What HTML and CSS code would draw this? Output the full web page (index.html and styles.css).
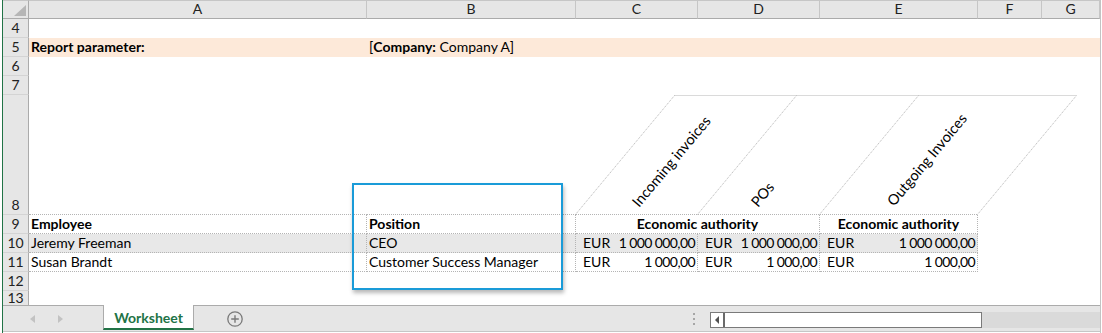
FILE: index.html
```html
<!DOCTYPE html>
<html>
<head>
<meta charset="utf-8">
<link rel="stylesheet" href="styles.css">
</head>
<body>
<div class="app">
  <div class="sheet">
    <div class="corner"></div>
    <div class="ch">A</div><div class="ch">B</div><div class="ch">C</div><div class="ch">D</div><div class="ch">E</div><div class="ch">F</div><div class="ch">G</div>

    <div class="rh">4</div>
    <div class="c"></div><div class="c"></div><div class="c"></div><div class="c"></div><div class="c"></div><div class="c"></div><div class="c"></div>

    <div class="rh">5</div>
    <div class="c or b">Report parameter:</div>
    <div class="c or">[<b>Company:</b> Company A]</div>
    <div class="c or"></div><div class="c or"></div><div class="c or"></div><div class="c or"></div><div class="c or"></div>

    <div class="rh">6</div>
    <div class="c"></div><div class="c"></div><div class="c"></div><div class="c"></div><div class="c"></div><div class="c"></div><div class="c"></div>

    <div class="rh">7</div>
    <div class="c"></div><div class="c"></div><div class="c"></div><div class="c"></div><div class="c"></div><div class="c"></div><div class="c"></div>

    <div class="rh rh-tall">8</div>
    <div class="c db"></div>
    <div class="c db"></div>
    <div class="diag">
      <svg class="diag-svg" width="524" height="120" viewBox="0 0 524 120">
        <g class="diag-lines">
          <line x1="-0.5" y1="119.5" x2="98.5" y2="0.5"/>
          <line x1="121.5" y1="119.5" x2="220.5" y2="0.5"/>
          <line x1="243.5" y1="119.5" x2="342.5" y2="0.5"/>
          <line x1="401.5" y1="119.5" x2="500.5" y2="0.5"/>
          <line x1="98.5" y1="0.5" x2="500.5" y2="0.5"/>
          <line x1="0" y1="119.5" x2="402" y2="119.5"/>
        </g>
        <text class="diag-text" x="63" y="113" transform="rotate(-50 63 113)">Incoming invoices</text>
        <text class="diag-text" x="182" y="113" transform="rotate(-50 182 113)">POs</text>
        <text class="diag-text" x="318" y="112" transform="rotate(-50 318 112)">Outgoing Invoices</text>
      </svg>
    </div>

    <div class="rh">9</div>
    <div class="c db dr b">Employee</div>
    <div class="c db dr b">Position</div>
    <div class="c db dr b ctr span2">Economic authority</div>
    <div class="c db dr b ctr">Economic authority</div>
    <div class="c"></div><div class="c"></div>

    <div class="rh">10</div>
    <div class="c db dr gr">Jeremy Freeman</div>
    <div class="c db dr gr">CEO</div>
    <div class="c db dr gr num"><span>EUR</span><span class="amt">1 000 000,00</span></div>
    <div class="c db dr gr num"><span>EUR</span><span class="amt">1 000 000,00</span></div>
    <div class="c db dr gr num"><span>EUR</span><span class="amt">1 000 000,00</span></div>
    <div class="c"></div><div class="c"></div>

    <div class="rh">11</div>
    <div class="c db dr">Susan Brandt</div>
    <div class="c db dr">Customer Success Manager</div>
    <div class="c db dr num"><span>EUR</span><span class="amt">1 000,00</span></div>
    <div class="c db dr num"><span>EUR</span><span class="amt">1 000,00</span></div>
    <div class="c db dr num"><span>EUR</span><span class="amt">1 000,00</span></div>
    <div class="c"></div><div class="c"></div>

    <div class="rh">12</div>
    <div class="c"></div><div class="c"></div><div class="c"></div><div class="c"></div><div class="c"></div><div class="c"></div><div class="c"></div>

    <div class="rh rh-last">13</div>
    <div class="c"></div><div class="c"></div><div class="c"></div><div class="c"></div><div class="c"></div><div class="c"></div><div class="c"></div>
  </div>

  <div class="tabbar">
    <div class="navs">
      <span class="nav-left"></span>
      <span class="nav-right"></span>
    </div>
    <div class="tab">Worksheet</div>
    <div class="plus">
      <svg width="16" height="16" viewBox="0 0 16 16">
        <circle cx="8" cy="8" r="7.2" fill="none" stroke="#7a7a7a" stroke-width="1.3"/>
        <path d="M8 4.2V11.8M4.2 8H11.8" stroke="#7a7a7a" stroke-width="1.4"/>
      </svg>
    </div>
    <div class="spacer"></div>
    <div class="dots"><i></i><i></i><i></i></div>
    <div class="hscroll">
      <div class="thumb">
        <div class="sbtn"><span class="sbtn-arrow"></span></div>
      </div>
    </div>
  </div>

  <div class="callout"></div>
</div>
</body>
</html>
```

FILE: styles.css
```css
* { box-sizing: border-box; }
html, body { margin: 0; padding: 0; background: #fff; }
body {
  width: 1102px;
  height: 333px;
  overflow: hidden;
  font-family: Lato, "Liberation Sans", sans-serif;
  font-size: 14px;
  color: #000;
}
.app {
  position: relative;
  margin-left: 2px;
  width: 1099px;
  height: 333px;
  border-left: 1px solid #217346;
  border-right: 1px solid #c3c3c3;
  display: flex;
  flex-direction: column;
}
.sheet {
  flex: none;
  height: 305px;
  overflow: hidden;
  display: grid;
  grid-template-columns: 26px 338px 209px 122px 122px 158px 64px 58px;
  grid-template-rows: repeat(5, 19px) 120px repeat(4, 19px) 14px;
}
.corner {
  position: relative;
  background: #e6e6e6;
  border-top: 1px solid #c6c6c6;
  border-right: 1px solid #ababab;
  border-bottom: 1px solid #ababab;
}
.corner::after {
  content: "";
  position: absolute;
  right: 2px;
  bottom: 2px;
  width: 0;
  height: 0;
  border-style: solid;
  border-width: 0 0 11px 12px;
  border-color: transparent transparent #b6b6b6 transparent;
}
.ch {
  background: #e6e6e6;
  border-top: 1px solid #c6c6c6;
  border-bottom: 1px solid #ababab;
  border-right: 1px solid #c6c6c6;
  text-align: center;
  line-height: 16px;
  color: #222;
}
.ch:last-of-type { border-right: none; }
.rh {
  background: #e6e6e6;
  border-right: 1px solid #ababab;
  border-bottom: 1px solid #d4d4d4;
  text-align: center;
  line-height: 18px;
  color: #222;
}
.rh-tall {
  display: flex;
  align-items: flex-end;
  justify-content: center;
}
.rh-last {
  border-bottom: none;
  line-height: 14px;
}
.c {
  padding: 0 2px;
  line-height: 18px;
  white-space: nowrap;
}
.b { font-weight: bold; }
.or { background: #fde9d9; }
.gr { background: #e8e8e8; }
.db { border-bottom: 1px dotted #b4b4b4; }
.dr { border-right: 1px dotted #b4b4b4; }
.ctr { text-align: center; }
.span2 { grid-column: span 2; }
.num {
  display: flex;
  justify-content: space-between;
  padding: 0 2px 0 7px;
}
.amt {
  letter-spacing: -0.6px;
}
.diag {
  grid-column: span 5;
  position: relative;
}
.diag-svg {
  position: absolute;
  left: 0;
  top: 0;
  overflow: visible;
}
.diag-lines line {
  stroke: #b4b4b4;
  stroke-width: 1;
  stroke-dasharray: 1 1;
}
.diag-text {
  font-family: Lato, "Liberation Sans", sans-serif;
  font-size: 14.5px;
  fill: #000;
}

.tabbar {
  flex: none;
  height: 27px;
  background: #e6e6e6;
  border-top: 1px solid #ababab;
  border-bottom: 1px solid #c6c6c6;
  display: flex;
}
.navs {
  width: 100px;
  display: flex;
  align-items: center;
  padding-left: 27px;
  gap: 23px;
}
.nav-left, .nav-right {
  width: 0;
  height: 0;
  border-top: 4px solid transparent;
  border-bottom: 4px solid transparent;
}
.nav-left { border-right: 5px solid #c2c2c2; }
.nav-right { border-left: 5px solid #c2c2c2; }
.tab {
  width: 91px;
  margin-top: -1px;
  margin-bottom: 1px;
  background: #fff;
  border-left: 1px solid #ababab;
  border-right: 1px solid #ababab;
  border-bottom: 2px solid #217346;
  color: #217346;
  font-weight: bold;
  display: flex;
  align-items: center;
  justify-content: center;
  padding-top: 1px;
}
.plus {
  margin-left: 33px;
  display: flex;
  align-items: center;
}
.plus svg { display: block; }
.spacer { flex: 1; }
.dots {
  width: 2px;
  margin-right: 15px;
  display: flex;
  flex-direction: column;
  justify-content: center;
  gap: 3px;
}
.dots i {
  display: block;
  width: 2px;
  height: 2px;
  background: #a6a6a6;
}
.hscroll {
  width: 390px;
  height: 16px;
  margin-top: 6px;
  background: #dadada;
  display: flex;
}
.thumb {
  width: 272px;
  height: 16px;
  background: #fff;
  border: 1px solid #7a7a7a;
  display: flex;
}
.sbtn {
  width: 14px;
  border-right: 2px solid #6a6a6a;
  display: flex;
  align-items: center;
  justify-content: center;
}
.sbtn-arrow {
  width: 0;
  height: 0;
  border-top: 4px solid transparent;
  border-bottom: 4px solid transparent;
  border-right: 4px solid #505050;
}
.callout {
  position: absolute;
  left: 349px;
  top: 183px;
  width: 211px;
  height: 107px;
  border: 2px solid #1a9bd8;
  box-shadow: 1px 3px 4px rgba(0, 0, 0, 0.28);
  pointer-events: none;
}
```
